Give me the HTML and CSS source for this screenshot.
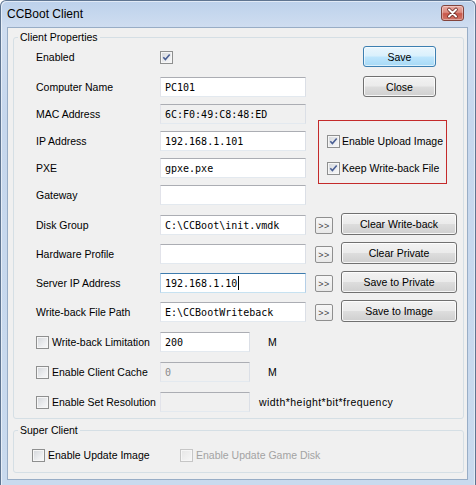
FILE: index.html
```html
<!DOCTYPE html>
<html>
<head>
<meta charset="utf-8">
<title>CCBoot Client</title>
<link rel="stylesheet" href="styles.css">
</head>
<body>
<div class="window">
  <div class="titlebar">
    <span class="title">CCBoot Client</span>
    <span class="close">
      <svg width="21" height="14" viewBox="0 0 21 14">
        <path d="M7 3.5 L14 10.5 M14 3.5 L7 10.5" stroke="#6b2a24" stroke-width="3.6" stroke-linecap="round"/>
        <path d="M7 3.5 L14 10.5 M14 3.5 L7 10.5" stroke="#ffffff" stroke-width="2" stroke-linecap="round"/>
      </svg>
    </span>
  </div>
  <div class="client">
    <fieldset class="group">
      <legend>Client Properties</legend>
      <div class="cp-grid">
        <div class="lbl">Enabled</div>
        <div class="cell"><span class="cb"><svg width="11" height="11" viewBox="0 0 11 11"><path d="M2.3 5.3 L4.4 7.6 L8.7 2.6" fill="none" stroke="#4a5f94" stroke-width="1.6"/></svg></span></div>

        <div class="side">
          <button class="btn btn-default">Save</button>
          <button class="btn btn-close">Close</button>
          <div class="redbox">
            <div class="chk"><span class="cb"><svg width="11" height="11" viewBox="0 0 11 11"><path d="M2.3 5.3 L4.4 7.6 L8.7 2.6" fill="none" stroke="#4a5f94" stroke-width="1.6"/></svg></span>Enable Upload Image</div>
            <div class="chk"><span class="cb"><svg width="11" height="11" viewBox="0 0 11 11"><path d="M2.3 5.3 L4.4 7.6 L8.7 2.6" fill="none" stroke="#4a5f94" stroke-width="1.6"/></svg></span>Keep Write-back File</div>
          </div>
        </div>

        <div class="lbl">Computer Name</div>
        <div class="tb">PC101</div>

        <div class="lbl">MAC Address</div>
        <div class="tb tb-ro">6C:F0:49:C8:48:ED</div>

        <div class="lbl">IP Address</div>
        <div class="tb">192.168.1.101</div>

        <div class="lbl">PXE</div>
        <div class="tb">gpxe.pxe</div>

        <div class="lbl">Gateway</div>
        <div class="tb"></div>

        <div class="lbl">Disk Group</div>
        <div class="tb">C:\CCBoot\init.vmdk</div>
        <div class="more">&gt;&gt;</div>

        <div class="lbl">Hardware Profile</div>
        <div class="tb"></div>
        <div class="more">&gt;&gt;</div>

        <div class="lbl">Server IP Address</div>
        <div class="tb tb-focus">192.168.1.10<span class="caret"></span></div>
        <div class="more">&gt;&gt;</div>

        <div class="lbl">Write-back File Path</div>
        <div class="tb">E:\CCBootWriteback</div>
        <div class="more">&gt;&gt;</div>

        <div class="actions">
          <button class="btn btn-wide">Clear Write-back</button>
          <button class="btn btn-wide">Clear Private</button>
          <button class="btn btn-wide">Save to Private</button>
          <button class="btn btn-wide">Save to Image</button>
        </div>

        <div class="optrow">
          <div class="optlbl"><span class="cb"></span>Write-back Limitation</div>
          <div class="tb tb-short">200</div>
          <span class="unit-m">M</span>
        </div>
        <div class="optrow">
          <div class="optlbl"><span class="cb"></span>Enable Client Cache</div>
          <div class="tb tb-short tb-ro tb-dis">0</div>
          <span class="unit-m">M</span>
        </div>
        <div class="optrow">
          <div class="optlbl"><span class="cb"></span>Enable Set Resolution</div>
          <div class="tb tb-short tb-ro"></div>
          <span class="unit-res">width*height*bit*frequency</span>
        </div>
      </div>
    </fieldset>

    <fieldset class="group group-sc">
      <legend>Super Client</legend>
      <div class="sc-body">
        <div class="sc-item sc-first"><span class="cb"></span>Enable Update Image</div>
        <div class="sc-item sc-disabled"><span class="cb cb-dis"></span>Enable Update Game Disk</div>
      </div>
    </fieldset>
  </div>
</div>
</body>
</html>
```

FILE: styles.css
```css
* { box-sizing: border-box; }

body {
  margin: 0;
  font-family: "Liberation Sans", Arial, sans-serif;
  font-size: 10.5px;
  color: #000;
  background: #fff;
}

.window {
  width: 476px;
  height: 485px;
  border: 1px solid #5f7591;
  border-bottom: none;
  border-radius: 6px 6px 0 0;
  background: linear-gradient(#bcd1eb 0px, #cfddf0 26px, #c6d7ed 120px, #c9daee 100%);
  padding: 0 7px 5px 6px;
  display: flex;
  flex-direction: column;
  box-shadow: inset 1px 1px 0 rgba(255,255,255,0.55), inset -1px 0 0 rgba(255,255,255,0.45);
}

.titlebar {
  height: 26px;
  flex: none;
  display: flex;
  align-items: flex-start;
  justify-content: space-between;
}

.title {
  font-size: 12px;
  line-height: 26px;
  color: #000;
}

.close {
  margin-top: 4px;
  margin-right: 4px;
  width: 23px;
  height: 16px;
  border: 1px solid #83443c;
  border-radius: 3px;
  background: linear-gradient(#e9aca3 0%, #dc8b80 45%, #c8574a 55%, #d2776a 100%);
  box-shadow: inset 0 0 0 1px rgba(255,255,255,0.35);
  display: flex;
  align-items: center;
  justify-content: center;
}

.client {
  flex: none;
  height: 453px;
  border: 1px solid #98adc6;
  background: #f0f0f0;
}

.group {
  margin: 3px 0 0 5px;
  width: 451px;
  padding: 0;
  border: 1px solid #d5dfe5;
  border-radius: 3px;
  min-inline-size: 0;
}

.group legend {
  padding: 0 2px;
  margin-left: 4px;
  line-height: 13px;
  font-size: 10.5px;
}

.group-sc {
  margin-top: 5px;
}

.cp-grid {
  display: grid;
  grid-template-columns: 124px 146px 9px 18px 8px 116px;
  grid-template-rows: 30px 27px 27px 27px 27px 30px 29px 29px 29px 30px 30px 30px 20px;
  align-items: start;
  padding: 3px 0 6px 22px;
}

.lbl {
  grid-column: 1;
  height: 20px;
  display: flex;
  align-items: center;
  white-space: nowrap;
}

.cell {
  grid-column: 2;
  height: 20px;
  display: flex;
  align-items: center;
}

.tb {
  grid-column: 2;
  height: 20px;
  border: 1px solid;
  border-color: #abadb3 #dbdfe6 #e3e9ef #e2e3ea;
  background: #fff;
  font-family: "DejaVu Sans Mono", "Liberation Mono", monospace;
  font-size: 10px;
  padding: 0 4px;
  display: flex;
  align-items: center;
  white-space: nowrap;
  overflow: hidden;
}

.tb-ro { background: #f0f0f0; }
.tb-dis { color: #8a8a8a; }

.tb-focus {
  border-color: #3d7bad #b5cfe7 #c7e2f1 #b5cfe7;
}

.caret {
  display: inline-block;
  width: 1px;
  height: 14px;
  background: #000;
  margin-left: 1px;
}

.more {
  grid-column: 4;
  height: 17px;
  margin-top: 2px;
  border: 1px solid #8f8f8f;
  border-radius: 2px;
  background: linear-gradient(#f7f7f7, #e8e8e8);
  font-size: 9px;
  letter-spacing: 0.5px;
  color: #444;
  display: flex;
  align-items: center;
  justify-content: center;
}

.side {
  grid-column: 3 / 7;
  grid-row: 1 / 7;
  display: flex;
  flex-direction: column;
  align-items: flex-start;
}

.btn {
  width: 73px;
  height: 21px;
  padding: 0;
  border: 1px solid #707070;
  border-radius: 3px;
  background: linear-gradient(#f2f2f2 0%, #ebebeb 48%, #dddddd 52%, #cfcfcf 100%);
  box-shadow: inset 0 0 0 1px rgba(255,255,255,0.8);
  font-family: inherit;
  font-size: 10.5px;
  color: #000;
}

.btn-default {
  margin: -1px 0 0 57px;
  border-color: #3c7fb1;
  background: linear-gradient(#eaf6fd 0%, #d9f0fc 48%, #bee6fd 52%, #a7d9f5 100%);
  box-shadow: inset 0 0 0 1px rgba(255,255,255,0.6);
}

.btn-close {
  margin: 9px 0 0 57px;
}

.redbox {
  margin: 23px 0 0 12px;
  width: 129px;
  height: 64px;
  border: 1px solid #c42a2a;
  padding: 13px 0 0 8px;
  display: flex;
  flex-direction: column;
  gap: 13px;
}

.chk {
  display: flex;
  align-items: center;
  height: 14px;
  gap: 2px;
  white-space: nowrap;
}

.actions {
  grid-column: 6;
  grid-row: 7 / 11;
  display: flex;
  flex-direction: column;
  gap: 7px;
  margin-top: -2px;
}

.btn-wide {
  width: 116px;
  height: 22px;
}

.optrow {
  grid-column: 1 / -1;
  height: 20px;
  display: flex;
  align-items: center;
}

.optlbl {
  width: 124px;
  display: flex;
  align-items: center;
  gap: 3px;
  white-space: nowrap;
}

.tb-short { width: 90px; }

.unit-m { margin-left: 18px; }
.unit-res { margin-left: 9px; white-space: nowrap; letter-spacing: 0.45px; }

.cb {
  flex: none;
  width: 13px;
  height: 13px;
  border: 1px solid #8e8f8f;
  background: linear-gradient(135deg, #d3d6da 0%, #eeeff1 65%, #f8f8f8 100%);
  box-shadow: inset 0 0 0 1px #f6f6f6;
  display: inline-flex;
  align-items: center;
  justify-content: center;
}

.cb-dis {
  border-color: #c6c6c6;
  background: linear-gradient(135deg, #e6e6e6, #f7f7f7);
}

.sc-body {
  display: flex;
  padding: 10px 0 9px 18px;
}

.sc-item {
  display: flex;
  align-items: center;
  gap: 3px;
  height: 16px;
  white-space: nowrap;
}

.sc-first { width: 148px; }

.sc-disabled { color: #a3a3a3; }
```
